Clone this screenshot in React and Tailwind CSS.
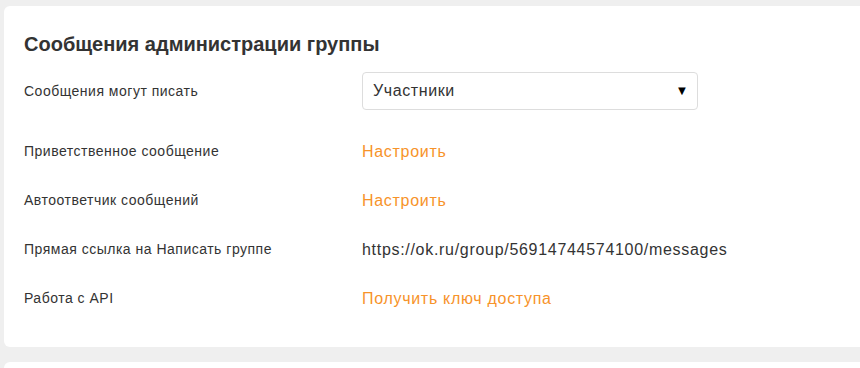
export default function App() {
  const rows = [
    { label: "Приветственное сообщение", value: "Настроить", orange: true },
    { label: "Автоответчик сообщений", value: "Настроить", orange: true },
    { label: "Прямая ссылка на Написать группе", value: "https://ok.ru/group/56914744574100/messages", orange: false },
    { label: "Работа с API", value: "Получить ключ доступа", orange: true },
  ];
  return (
    <div className="w-[860px] h-[368px] overflow-hidden bg-[#efefef] pt-[6px] pl-[4px] font-['Liberation_Sans',Arial,sans-serif]">
      <div className="w-[900px] h-[341px] bg-white rounded-[6px] pl-[20px] pt-[24px]">
        <h1 className="text-[20px] leading-[28px] font-bold text-[#333]">Сообщения администрации группы</h1>
        <div className="mt-[14px] flex items-center h-[38px]">
          <div className="w-[338px] text-[14px] tracking-[0.5px] text-[#333]">Сообщения могут писать</div>
          <div className="w-[336px] h-[38px] border border-[#ddd] rounded-[4px] flex items-center justify-between pl-[10px] pr-[8px] text-[16px] tracking-[0.6px] text-[#333]">
            <span>Участники</span>
            <span className="text-[13px] text-black">▼</span>
          </div>
        </div>
        <div className="mt-[17px] flex flex-col">
          {rows.map((r) => (
            <div key={r.label} className="flex items-center h-[49px]">
              <div className="w-[338px] text-[14px] tracking-[0.5px] text-[#333]">{r.label}</div>
              <div className={"text-[16px] tracking-[0.7px] " + (r.orange ? "text-[#f7932a]" : "text-[#333]")}>{r.value}</div>
            </div>
          ))}
        </div>
      </div>
      <div className="mt-[15px] w-[900px] h-[20px] bg-white rounded-[6px]"></div>
    </div>
  );
}
